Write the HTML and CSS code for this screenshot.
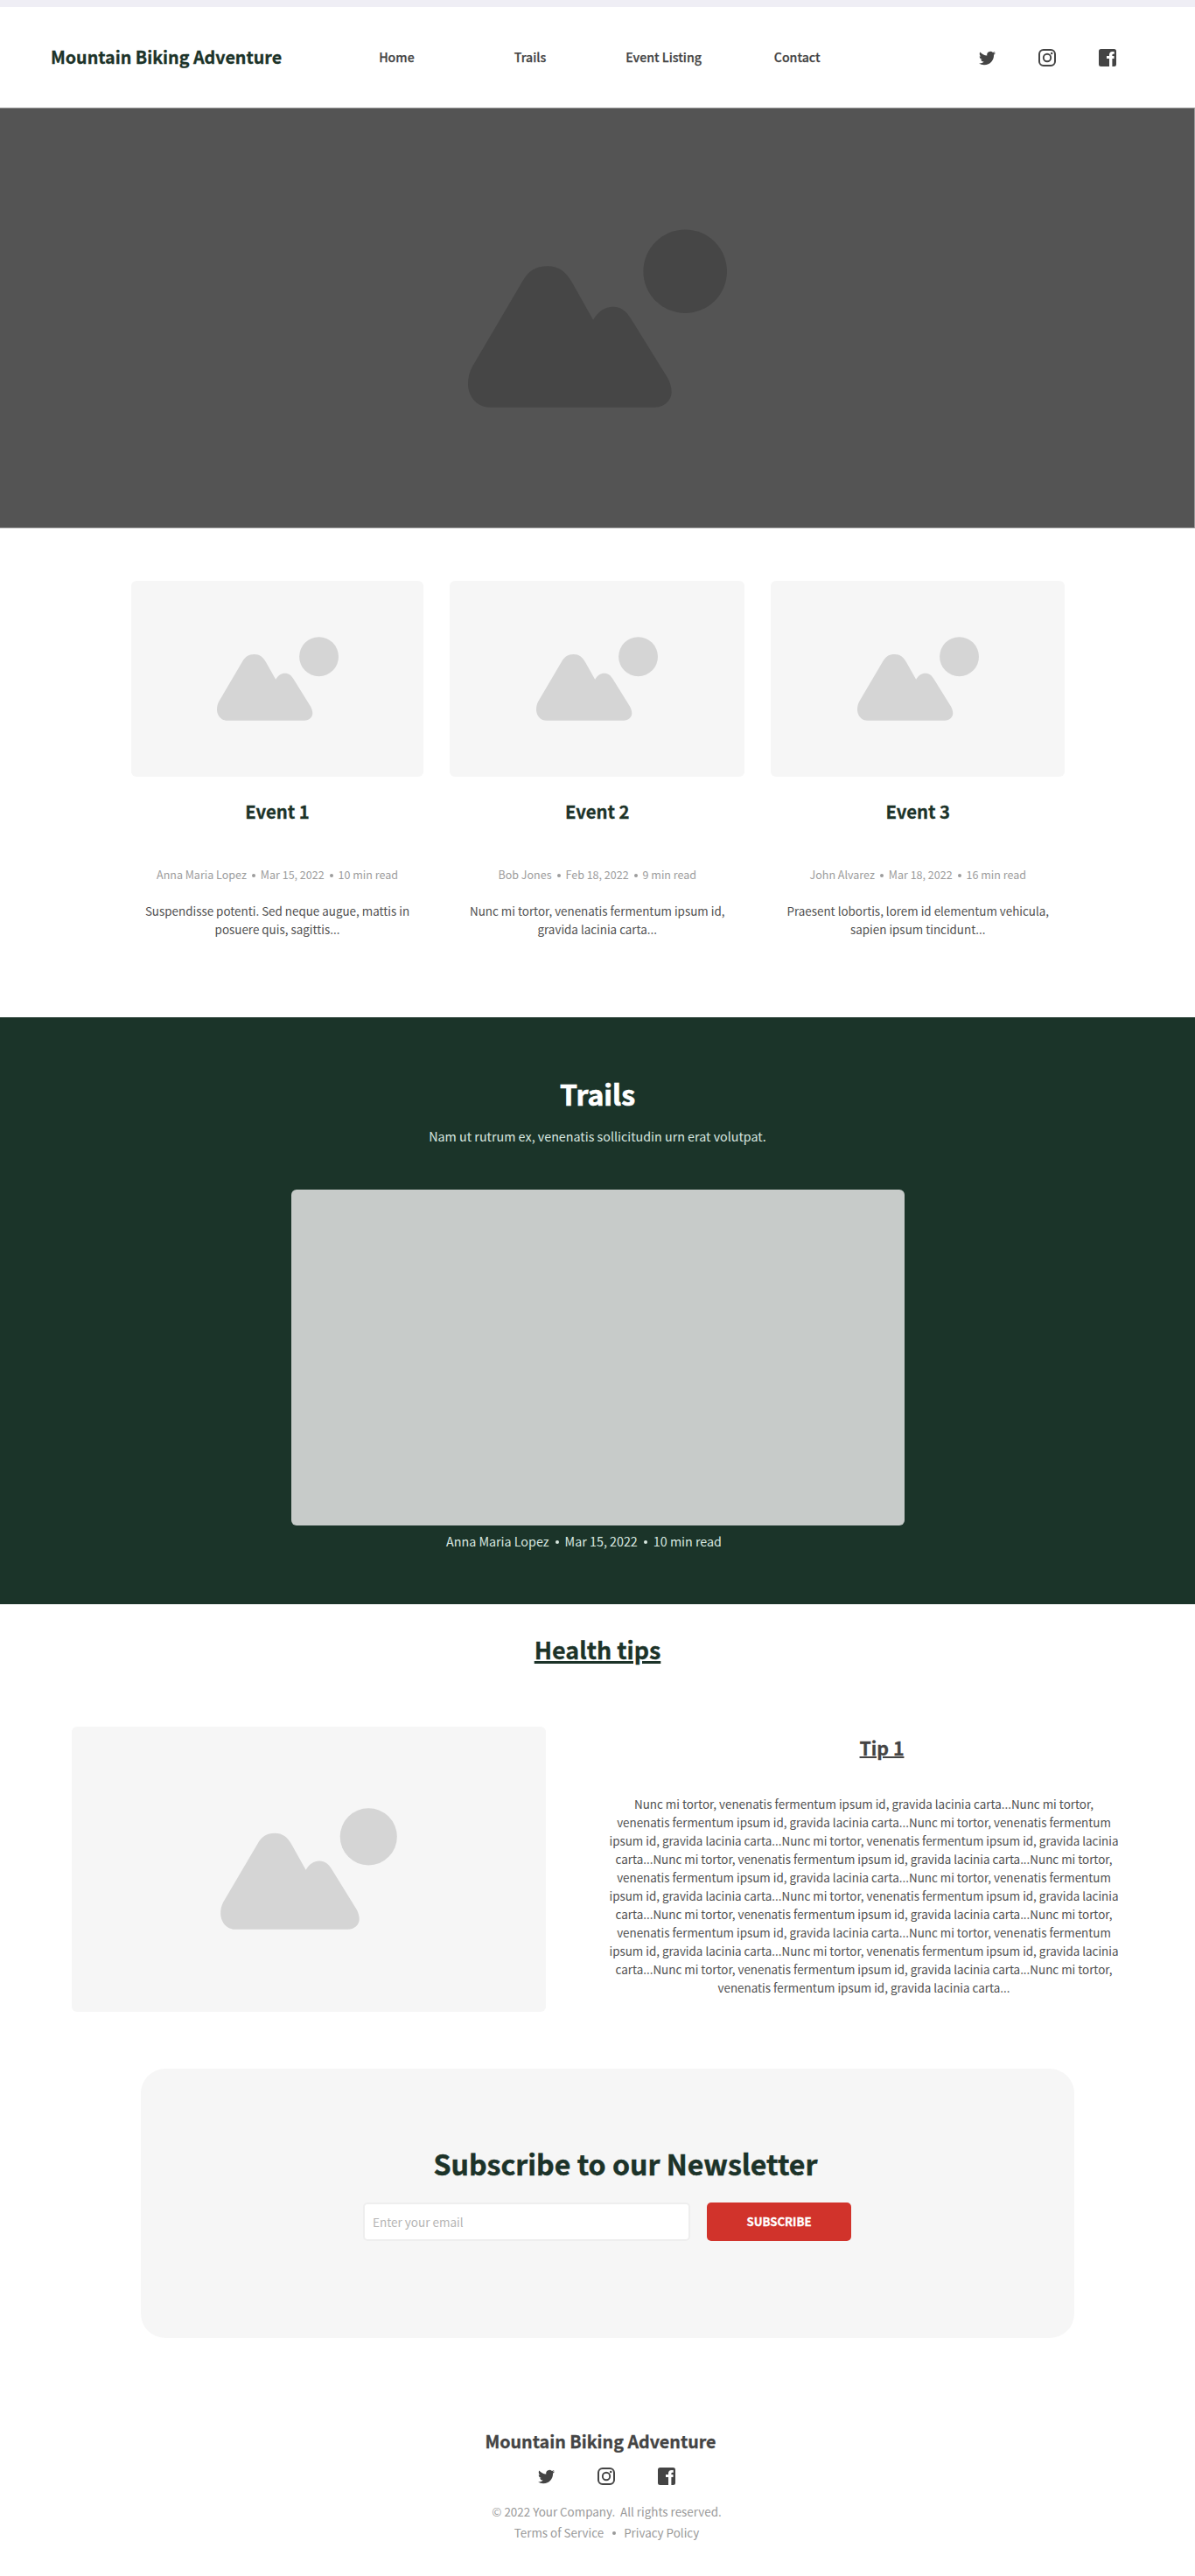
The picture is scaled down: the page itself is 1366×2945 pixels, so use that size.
FILE: index.html
```
<!DOCTYPE html>
<html lang="en">
<head>
<meta charset="utf-8">
<title>Mountain Biking Adventure</title>
<link rel="stylesheet" href="styles.css">
</head>
<body>
<svg class="sprite" aria-hidden="true">
  <symbol id="picture" viewBox="0 0 296 204">
    <circle cx="248.2" cy="48.2" r="47.8"/>
    <path d="M25 203.7C9 203.7 0 190 0 177C0 170 1.500 163 5 157L62 60C69 48 77 42.300 91 42.300C104 42.300 112 49 119 61L143 103.700C149 94 156 88.700 166 88.700C175 88.700 181 94 186 102L228 169.700C231 175 232.700 181 232.700 186.300C232.700 196 224 203.700 213.300 203.700Z"/>
  </symbol>
  <symbol id="twitter" viewBox="0 0 24 24">
    <path d="M23.950 4.570a10 10 0 0 1-2.820.770 4.960 4.960 0 0 0 2.160-2.720c-.950.550-2 .960-3.130 1.180a4.920 4.920 0 0 0-8.380 4.480C7.690 8.100 4.070 6.130 1.640 3.160a4.820 4.820 0 0 0-.670 2.480c0 1.710.870 3.210 2.190 4.100a4.900 4.900 0 0 1-2.230-.620v.060a4.920 4.920 0 0 0 3.950 4.830 5 5 0 0 1-2.210.080 4.940 4.940 0 0 0 4.600 3.420A9.870 9.870 0 0 1 0 19.540a13.990 13.990 0 0 0 7.550 2.210c9.050 0 14-7.500 14-13.980 0-.210 0-.420-.020-.630a9.940 9.940 0 0 0 2.460-2.550z"/>
  </symbol>
  <symbol id="instagram" viewBox="0 0 20 20">
    <rect x="1" y="1" width="18" height="18" rx="4.800" fill="none" stroke="currentColor" stroke-width="2"/>
    <circle cx="10" cy="10" r="4.200" fill="none" stroke="currentColor" stroke-width="1.900"/>
    <circle cx="15.200" cy="4.900" r="1.250"/>
  </symbol>
  <symbol id="facebook" viewBox="0 0 20 20">
    <path d="M2.500 0h15A2.500 2.500 0 0 1 20 2.500v15a2.500 2.500 0 0 1-2.500 2.500h-2.100v-9.100h2.100V7.900h-2.100V7.100c0-.9.400-1.300 1.300-1.300h1V2.900h-2.200c-2.200 0-3.500 1.400-3.500 3.700v1.300H9v3h3V20H2.500A2.500 2.500 0 0 1 0 17.500v-15A2.500 2.500 0 0 1 2.500 0z"/>
  </symbol>
</svg>

<header class="header">
  <a class="brand">Mountain Biking Adventure</a>
  <nav class="nav">
    <a>Home</a><a>Trails</a><a>Event Listing</a><a>Contact</a>
  </nav>
  <div class="social">
    <svg class="icon icon-twitter"><use href="#twitter"/></svg>
    <svg class="icon"><use href="#instagram"/></svg>
    <svg class="icon"><use href="#facebook"/></svg>
  </div>
</header>

<section class="hero"><svg class="hero-picture"><use href="#picture"/></svg></section>

<section class="events">
  <article class="card">
    <div class="thumb"><svg class="thumb-picture"><use href="#picture"/></svg></div>
    <h2 class="card-title">Event 1</h2>
    <p class="meta"><span>Anna Maria Lopez</span><i class="dot"></i><span>Mar 15, 2022</span><i class="dot"></i><span>10 min read</span></p>
    <p class="text">Suspendisse potenti. Sed neque augue, mattis in posuere quis, sagittis...</p>
  </article>
  <article class="card">
    <div class="thumb"><svg class="thumb-picture"><use href="#picture"/></svg></div>
    <h2 class="card-title">Event 2</h2>
    <p class="meta"><span>Bob Jones</span><i class="dot"></i><span>Feb 18, 2022</span><i class="dot"></i><span>9 min read</span></p>
    <p class="text">Nunc mi tortor, venenatis fermentum ipsum id, gravida lacinia carta...</p>
  </article>
  <article class="card">
    <div class="thumb"><svg class="thumb-picture"><use href="#picture"/></svg></div>
    <h2 class="card-title">Event 3</h2>
    <p class="meta"><span>John Alvarez</span><i class="dot"></i><span>Mar 18, 2022</span><i class="dot"></i><span>16 min read</span></p>
    <p class="text">Praesent lobortis, lorem id elementum vehicula, sapien ipsum tincidunt...</p>
  </article>
</section>

<section class="trails">
  <h2 class="trails-title">Trails</h2>
  <p class="trails-lead">Nam ut rutrum ex, venenatis sollicitudin urn erat volutpat.</p>
  <div class="trails-media"></div>
  <p class="meta trails-meta"><span>Anna Maria Lopez</span><i class="dot"></i><span>Mar 15, 2022</span><i class="dot"></i><span>10 min read</span></p>
</section>

<section class="health">
  <h2 class="health-title">Health tips</h2>
  <div class="tip">
    <div class="thumb tip-thumb"><svg class="tip-picture"><use href="#picture"/></svg></div>
    <div class="tip-body">
      <h3 class="tip-title">Tip 1</h3>
      <p class="text">Nunc mi tortor, venenatis fermentum ipsum id, gravida lacinia carta...Nunc mi tortor, venenatis fermentum ipsum id, gravida lacinia carta...Nunc mi tortor, venenatis fermentum ipsum id, gravida lacinia carta...Nunc mi tortor, venenatis fermentum ipsum id, gravida lacinia carta...Nunc mi tortor, venenatis fermentum ipsum id, gravida lacinia carta...Nunc mi tortor, venenatis fermentum ipsum id, gravida lacinia carta...Nunc mi tortor, venenatis fermentum ipsum id, gravida lacinia carta...Nunc mi tortor, venenatis fermentum ipsum id, gravida lacinia carta...Nunc mi tortor, venenatis fermentum ipsum id, gravida lacinia carta...Nunc mi tortor, venenatis fermentum ipsum id, gravida lacinia carta...Nunc mi tortor, venenatis fermentum ipsum id, gravida lacinia carta...Nunc mi tortor, venenatis fermentum ipsum id, gravida lacinia carta...Nunc mi tortor, venenatis fermentum ipsum id, gravida lacinia carta...Nunc mi tortor, venenatis fermentum ipsum id, gravida lacinia carta...</p>
    </div>
  </div>
</section>

<section class="newsletter">
  <h2 class="newsletter-title">Subscribe to our Newsletter</h2>
  <form class="form">
    <input class="email" type="email" placeholder="Enter your email">
    <button class="submit" type="button">SUBSCRIBE</button>
  </form>
</section>

<footer class="footer">
  <a class="brand footer-brand">Mountain Biking Adventure</a>
  <div class="social">
    <svg class="icon icon-twitter"><use href="#twitter"/></svg>
    <svg class="icon"><use href="#instagram"/></svg>
    <svg class="icon"><use href="#facebook"/></svg>
  </div>
  <p class="legal">© 2022 Your Company.&nbsp; All rights reserved.</p>
  <p class="legal links"><a>Terms of Service</a><i class="dot"></i><a>Privacy Policy</a></p>
</footer>
</body>
</html>
```
FILE: styles.css
```
* { box-sizing: border-box; }

body {
  margin: 0;
  border-top: 8px solid #efeef5;
  background: #fff;
  color: #444;
  font-family: "Noto Sans CJK SC", "Noto Sans", sans-serif;
}

h2, h3, p { margin: 0; }
h2, h3, .brand { -webkit-text-stroke: 0.3px currentColor; }

svg { display: block; fill: currentColor; }
.sprite { display: none; }

.header {
  display: flex;
  align-items: center;
  height: 115px;
  padding: 0 90px 2px 58px;
}
.brand {
  color: #1c3329;
  font-size: 19.7px;
  font-weight: 700;
  line-height: 30px;
  white-space: nowrap;
}
.nav {
  display: grid;
  grid-template-columns: repeat(4, 152.6px);
  margin-left: 55px;
  font-size: 14.15px;
  font-weight: 500;
  line-height: 20px;
  text-align: center;
  -webkit-text-stroke: 0.25px currentColor;
}

.social { display: flex; align-items: center; gap: 49px; }
.header .social { margin-left: auto; padding-top: 3px; }
.icon { width: 20px; height: 20px; }
.icon-twitter { width: 19px; height: 19px; }

.hero {
  display: flex;
  align-items: center;
  justify-content: center;
  height: 481px;
  border: 1px solid #999;
  border-width: 1px 1px 1px 0;
  background: #545454;
}
.hero-picture { width: 296px; height: 204px; color: #464646; }

.events {
  display: grid;
  grid-template-columns: 334.5px 337px 336px;
  justify-content: center;
  gap: 30px;
  height: 559px;
  padding: 60px 0 0 1px;
  text-align: center;
}
.thumb {
  display: flex;
  align-items: center;
  justify-content: center;
  height: 224px;
  border-radius: 6px;
  background: #f6f6f6;
  color: #d5d5d5;
}
.thumb-picture { width: 139px; height: 96px; }
.card-title {
  margin-top: 24px;
  color: #1c3329;
  font-size: 20.3px;
  line-height: 30px;
}
.meta {
  display: flex;
  justify-content: center;
  margin-top: 48px;
  color: #9c9c9c;
  font-size: 12.5px;
  line-height: 20px;
}
.dot {
  align-self: center;
  width: 4px;
  height: 4px;
  margin: 1px 6px 0;
  border-radius: 50%;
  background: currentColor;
}
.text {
  color: #505050;
  font-size: 13.4px;
  line-height: 21px;
  text-align: center;
}
.card .text { margin-top: 21px; padding: 0 14px; }

.trails {
  display: flex;
  flex-direction: column;
  align-items: center;
  height: 671px;
  padding-top: 67px;
  background: #1b3429;
  color: #d9e8e0;
}
.trails-title {
  color: #fff;
  font-size: 32px;
  line-height: 40px;
  -webkit-text-stroke-width: 0.7px;
}
.trails-lead { margin-top: 19px; font-size: 14.3px; line-height: 20px; }
.trails-media {
  width: 701px;
  height: 384px;
  margin-top: 51px;
  border-radius: 6px;
  background: #c7cbc9;
}
.trails-meta {
  margin-top: 8px;
  padding-right: 31px;
  color: inherit;
  font-size: 14.3px;
}
.trails-meta .dot { margin: 1px 7px 0; }

.health { padding-top: 34px; }
.health-title {
  color: #1c3329;
  font-size: 26.9px;
  line-height: 36px;
  text-align: center;
  text-decoration: underline;
  text-decoration-thickness: 3px;
}
.tip { display: flex; gap: 70.5px; margin-top: 70px; padding-left: 82px; }
.tip-thumb { width: 541.5px; height: 325.5px; }
.tip-picture { width: 202px; height: 139px; }
.tip-body { width: 587px; padding-top: 9px; }
.tip-title {
  margin-bottom: 39px;
  padding-left: 41px;
  font-size: 21.3px;
  line-height: 30px;
  text-align: center;
  text-decoration: underline;
  text-decoration-thickness: 2px;
}

.newsletter {
  width: 1067px;
  height: 308px;
  margin: 65.5px 0 0 160.5px;
  padding-top: 87px;
  border-radius: 28px;
  background: #f6f6f6;
}
.newsletter-title {
  padding-left: 42px;
  color: #1c3329;
  font-size: 32.1px;
  line-height: 42px;
  text-align: center;
  -webkit-text-stroke-width: 0.5px;
}
.form { display: flex; justify-content: center; gap: 19px; margin-top: 24px; }
.email, .submit { height: 44px; border-radius: 5px; font-family: inherit; }
.email {
  width: 374px;
  padding: 0 9px 1px;
  border: 2px solid #eee;
  background: #fff;
  font-size: 13.5px;
}
.email::placeholder { color: #b5b5b5; }
.submit {
  width: 165px;
  padding: 0 0 1px;
  border: 0;
  background: #d1332b;
  color: #fff;
  font-size: 13.2px;
  font-weight: 700;
  -webkit-text-stroke: 0.3px currentColor;
}

.footer {
  display: flex;
  flex-direction: column;
  align-items: center;
  margin-top: 103px;
  padding-left: 21px;
}
.footer-brand { padding-right: 14px; color: #444; }
.footer .social { margin: 15px 0 18px; }
.legal { color: #999; font-size: 13.4px; line-height: 24px; }
.links { display: flex; }
.links .dot { margin: 1px 9.5px 0; }
```
